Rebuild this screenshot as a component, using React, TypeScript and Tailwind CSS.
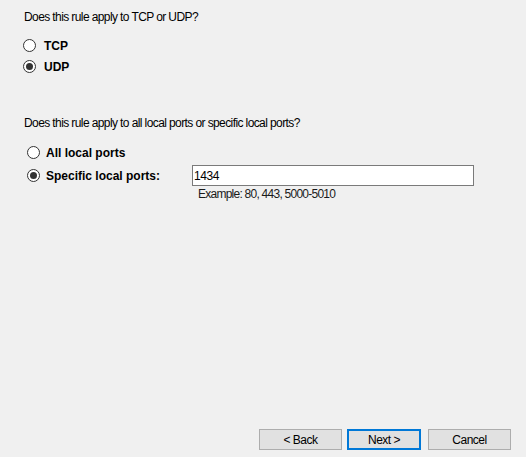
import React from "react";

function Radio({ checked }: { checked?: boolean }) {
  return (
    <span className="flex h-[13px] w-[13px] shrink-0 items-center justify-center rounded-full border border-[#333333] bg-white">
      {checked && <span className="h-[7px] w-[7px] rounded-full bg-[#333333]" />}
    </span>
  );
}

export default function App() {
  return (
    <div
      className="flex h-[457px] w-[526px] flex-col bg-[#f0f0f0] text-[12px] text-black"
      style={{ fontFamily: '"Liberation Sans", Arial, sans-serif' }}
    >
      <div className="pl-[24px] pt-[10px] leading-[15px] tracking-[-0.6px]">Does this rule apply to TCP or UDP?</div>
      <div className="mt-[14px] flex flex-col gap-[8px] pl-[23px]">
        <div className="flex h-[13px] items-center gap-[8px]">
          <Radio />
          <span className="font-bold text-[#000000]">TCP</span>
        </div>
        <div className="flex h-[13px] items-center gap-[8px]">
          <Radio checked />
          <span className="font-bold">UDP</span>
        </div>
      </div>
      <div className="mt-[43px] pl-[24px] leading-[15px] tracking-[-0.6px]">
        Does this rule apply to all local ports or specific local ports?
      </div>
      <div className="mt-[15px] flex flex-col gap-[10px] pl-[27px]">
        <div className="flex h-[13px] items-center gap-[6px]">
          <Radio />
          <span className="font-bold">All local ports</span>
        </div>
        <div className="flex h-[13px] items-center">
          <Radio checked />
          <span className="ml-[6px] w-[146px] font-bold">Specific local ports:</span>
          <div className="flex h-[21px] w-[282px] items-center border border-[#7a7a7a] bg-white pl-[1px] tracking-[-0.4px]">
            1434
          </div>
        </div>
      </div>
      <div className="mt-[5px] pl-[198px] leading-[15px] tracking-[-0.75px] text-[#1a1a1a]">Example: 80, 443, 5000-5010</div>
      <div className="mt-auto flex justify-end pb-[7px] pr-[15px] tracking-[-0.5px]">
        <button className="h-[21px] w-[83px] border border-[#adadad] bg-[#e1e1e1] text-[12px]">&lt; Back</button>
        <button className="ml-[5px] h-[21px] w-[74px] border-2 border-[#0078d7] bg-[#e1e1e1] text-[12px]">Next &gt;</button>
        <button className="ml-[7px] h-[21px] w-[83px] border border-[#adadad] bg-[#e1e1e1] text-[12px]">Cancel</button>
      </div>
    </div>
  );
}
